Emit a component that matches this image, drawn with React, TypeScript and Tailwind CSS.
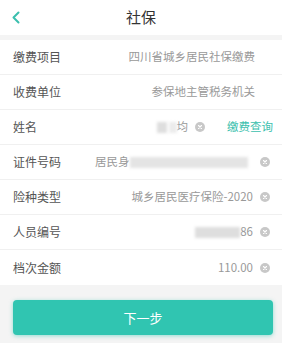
import React from "react";

const ClearIcon = () => (
  <span className="w-[10px] h-[10px] rounded-full bg-[#c8c8c8] flex items-center justify-center shrink-0">
    <svg width="6" height="6" viewBox="0 0 6 6">
      <path d="M1.5 1.5L4.5 4.5M4.5 1.5L1.5 4.5" stroke="#fff" strokeWidth="1.1" strokeLinecap="round" />
    </svg>
  </span>
);

const Blur = ({ w, className = "" }: { w: string; className?: string }) => (
  <span className={`inline-block h-[11px] bg-[#dedede] blur-[1.5px] ${w} ${className}`} />
);

type RowProps = { label: string; children: React.ReactNode; last?: boolean };
const Row = ({ label, children, last }: RowProps) => (
  <div className={`h-[35px] flex items-center pl-[13px] pr-[9px] bg-white ${last ? "" : "border-b border-[#f0f0f0]"}`}>
    <span className="text-[12px] text-[#555] w-[82px] shrink-0 whitespace-nowrap">{label}</span>
    <div className="flex-1 flex items-center justify-end text-[11.5px] text-[#999] min-w-0 whitespace-nowrap">{children}</div>
  </div>
);

export default function App() {
  return (
    <div className="w-[282px] h-[343px] bg-[#f4f4f4] overflow-hidden" style={{ fontFamily: '"Noto Sans CJK SC", "Noto Sans", sans-serif' }}>
      <div className="h-[35px] bg-white relative flex items-center justify-center">
        <svg className="absolute left-[11px] top-[11px]" width="10" height="13" viewBox="0 0 10 13">
          <path d="M7.5 1.5L2.5 6.5L7.5 11.5" stroke="#3bbfae" strokeWidth="2" fill="none" strokeLinecap="round" strokeLinejoin="round" />
        </svg>
        <span className="text-[15px] text-[#333]">社保</span>
      </div>
      <div className="mt-[5px]">
        <Row label="缴费项目">
          <span className="mr-[18px]">四川省城乡居民社保缴费</span>
        </Row>
        <Row label="收费单位">
          <span className="mr-[18px]">参保地主管税务机关</span>
        </Row>
        <Row label="姓名">
          <span className="flex items-center">
            <Blur w="w-[10px]" />
            <Blur w="w-[8px]" className="ml-[2px] bg-[#ececec]" />
            <span>均</span>
          </span>
          <span className="ml-[7px]"><ClearIcon /></span>
          <span className="ml-[22px] text-[#3bbfae]">缴费查询</span>
        </Row>
        <Row label="证件号码">
          <div className="flex-1 flex items-center">
            <span>居民身</span>
            <Blur w="flex-1" className="bg-[#e4e4e4]" />
          </div>
          <span className="ml-[12px] mr-[3px]"><ClearIcon /></span>
        </Row>
        <Row label="险种类型">
          <span>城乡居民医疗保险-2020</span>
          <span className="ml-[7px] mr-[3px]"><ClearIcon /></span>
        </Row>
        <Row label="人员编号">
          <Blur w="w-[45px]" />
          <span>86</span>
          <span className="ml-[7px] mr-[3px]"><ClearIcon /></span>
        </Row>
        <Row label="档次金额" last>
          <span>110.00</span>
          <span className="ml-[7px] mr-[3px]"><ClearIcon /></span>
        </Row>
      </div>
      <div className="px-[13px] pt-[15px]">
        <button className="w-[260px] h-[35px] rounded-[4px] bg-[#30c5b1] text-white text-[13px] shadow-[0_1px_4px_rgba(48,197,177,0.5)]">
          下一步
        </button>
      </div>
    </div>
  );
}
